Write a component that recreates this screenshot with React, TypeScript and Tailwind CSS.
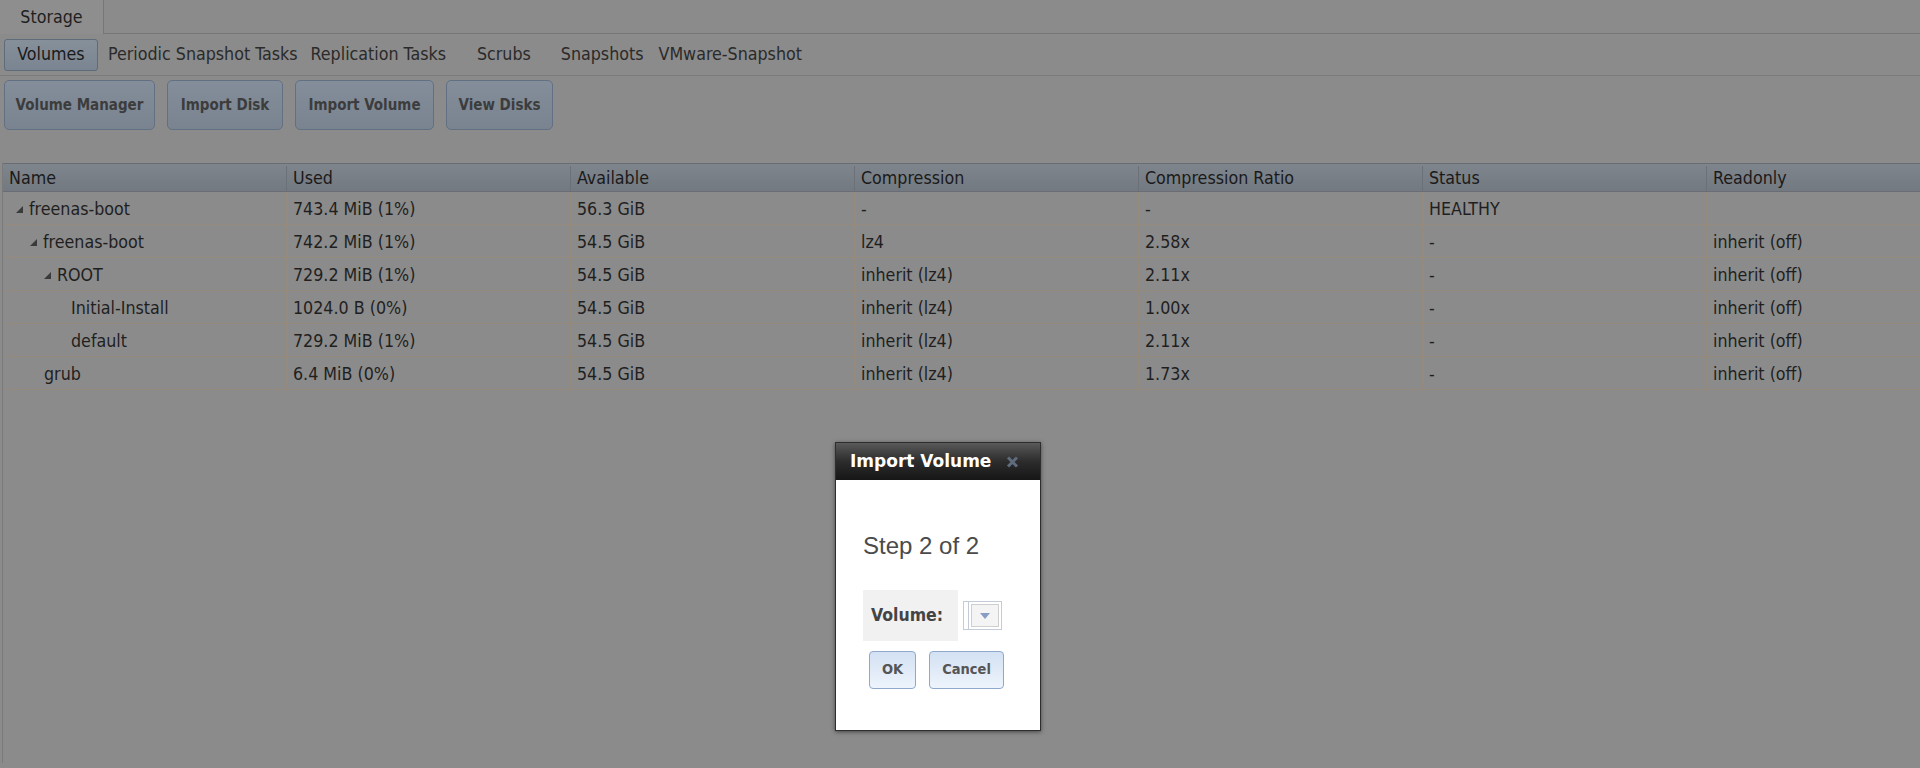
const font = "font-['DejaVu_Sans_Condensed','Liberation_Sans',sans-serif]";

const subnav = [
  { label: "Periodic Snapshot Tasks", ml: "ml-[10px]" },
  { label: "Replication Tasks", ml: "ml-[13px]" },
  { label: "Scrubs", ml: "ml-[31px]" },
  { label: "Snapshots", ml: "ml-[30px]" },
  { label: "VMware-Snapshot", ml: "ml-[15px]" },
];

const actions = [
  { label: "Volume Manager", w: "w-[151px]" },
  { label: "Import Disk", w: "w-[116px]" },
  { label: "Import Volume", w: "w-[139px]" },
  { label: "View Disks", w: "w-[107px]" },
];

const columns = [
  "Name",
  "Used",
  "Available",
  "Compression",
  "Compression Ratio",
  "Status",
  "Readonly",
];

type Row = {
  name: string;
  depth: number;
  open: boolean;
  cells: string[];
};

const rows: Row[] = [
  { name: "freenas-boot", depth: 0, open: true, cells: ["743.4 MiB (1%)", "56.3 GiB", "-", "-", "HEALTHY", ""] },
  { name: "freenas-boot", depth: 1, open: true, cells: ["742.2 MiB (1%)", "54.5 GiB", "lz4", "2.58x", "-", "inherit (off)"] },
  { name: "ROOT", depth: 2, open: true, cells: ["729.2 MiB (1%)", "54.5 GiB", "inherit (lz4)", "2.11x", "-", "inherit (off)"] },
  { name: "Initial-Install", depth: 3, open: false, cells: ["1024.0 B (0%)", "54.5 GiB", "inherit (lz4)", "1.00x", "-", "inherit (off)"] },
  { name: "default", depth: 3, open: false, cells: ["729.2 MiB (1%)", "54.5 GiB", "inherit (lz4)", "2.11x", "-", "inherit (off)"] },
  { name: "grub", depth: 2, open: false, cells: ["6.4 MiB (0%)", "54.5 GiB", "inherit (lz4)", "1.73x", "-", "inherit (off)"] },
];

const indent = ["pl-[13px]", "pl-[27px]", "pl-[41px]", "pl-[68px]"];

function Expander() {
  return (
    <svg width="7" height="7" viewBox="0 0 7 7" className="mr-[6px] shrink-0" aria-hidden="true">
      <path d="M7 0 L7 7 L0 7 Z" fill="#3a3a3a" />
    </svg>
  );
}

export default function App() {
  return (
    <div className={`relative h-[768px] w-[1920px] overflow-hidden bg-[#8b8b8b] text-[#1f1f1f] ${font}`}>
      {/* tab strip */}
      <div className="flex h-[34px] border-b border-[#777777]">
        <div className="-mb-px flex w-[104px] items-center justify-center border-r border-[#777777] bg-[#8e8e8e] text-[17.7px]">
          Storage
        </div>
      </div>

      {/* sub navigation */}
      <div className="flex h-[42px] items-center border-b border-[#7a7a7a] pl-[4px] text-[17.7px]">
        <div className="flex h-[32px] w-[94px] items-center justify-center rounded-[3px] border border-[#5e6b7b] bg-gradient-to-b from-[#86909b] to-[#7b8591] text-[#1a1a1a]">
          Volumes
        </div>
        {subnav.map((item) => (
          <span key={item.label} className={`${item.ml} text-[#2a2a2a]`}>
            {item.label}
          </span>
        ))}
      </div>

      {/* action buttons */}
      <div className="flex gap-[12px] pl-[4px] pt-[4px]">
        {actions.map((a) => (
          <div
            key={a.label}
            className={`${a.w} flex h-[50px] items-center justify-center rounded-[5px] border border-[#627083] bg-gradient-to-b from-[#848e9a] to-[#7a8490] text-[15px] font-bold text-[#3c3c3c]`}
          >
            {a.label}
          </div>
        ))}
      </div>

      {/* volumes grid */}
      <div className="ml-[2px] mt-[33px] h-[600px] border-l border-[#7a7a7a]">
        <div className="flex h-[29px] border-y border-[#6a6e74] bg-gradient-to-b from-[#7f858c] to-[#737980] pt-[2px] text-[17.7px] text-[#1a1a1a]">
          {columns.map((c, i) => (
            <div
              key={c}
              className={`flex w-[284px] shrink-0 items-center px-[6px] ${i < columns.length - 1 ? "border-r border-[#6c7178]" : ""}`}
            >
              {c}
            </div>
          ))}
        </div>
        {rows.map((r, ri) => (
          <div key={ri} className="flex h-[33px] border-b border-[#958a7c] text-[17.7px]">
            <div className={`flex w-[284px] shrink-0 items-center border-r border-[#958a7c] pt-[2px] ${indent[r.depth]}`}>
              {r.open ? <Expander /> : null}
              <span>{r.name}</span>
            </div>
            {r.cells.map((cell, ci) => (
              <div
                key={ci}
                className={`flex w-[284px] shrink-0 items-center px-[6px] pt-[2px] ${ci < r.cells.length - 1 ? "border-r border-[#958a7c]" : ""}`}
              >
                {cell}
              </div>
            ))}
          </div>
        ))}
      </div>

      {/* modal dialog */}
      <div className="absolute left-[835px] top-[442px] flex h-[289px] w-[206px] flex-col border border-[#2e2e2e] bg-white shadow-[0_1px_4px_rgba(0,0,0,0.5)]">
        <div className="flex h-[37px] items-center justify-between bg-gradient-to-b from-[#5a5a5a] via-[#2c2c2c] to-[#161616] pl-[14px] pr-[21px]">
          <span className="font-['DejaVu_Sans','Liberation_Sans',sans-serif] text-[17px] font-bold text-white">
            Import Volume
          </span>
          <svg width="13" height="12" viewBox="0 0 13 12" aria-hidden="true">
            <path d="M2 1.5 L11 10.5 M11 1.5 L2 10.5" stroke="#5f6c7d" strokeWidth="3" strokeLinecap="butt" />
          </svg>
        </div>
        <div className="flex flex-col pl-[27px] pt-[52px]">
          <div className="font-['Liberation_Sans',sans-serif] text-[24px] leading-[28px] text-[#4a4a4a]">
            Step 2 of 2
          </div>
          <div className="mt-[30px] flex items-center">
            <div className="flex h-[51px] w-[95px] items-center bg-[#f1f1f1] pl-[8px] text-[17.5px] font-bold text-[#444444]">
              Volume:
            </div>
            <div className="ml-[5px] flex h-[29px] w-[39px] items-stretch border border-[#c3cad8] bg-white">
              <div className="w-[5px] border-r border-[#c3cad8]" />
              <div className="m-[2px] flex flex-1 items-center justify-center border border-[#cfcfcf] bg-[#f4f4f4]">
                <svg width="10" height="6" viewBox="0 0 10 6" aria-hidden="true">
                  <path d="M0 0 L10 0 L5 6 Z" fill="#8a9cc4" />
                </svg>
              </div>
            </div>
          </div>
          <div className="ml-[6px] mt-[10px] flex gap-[13px] text-[14.5px] font-bold text-[#555555]">
            <div className="flex h-[38px] w-[47px] items-center justify-center rounded-[4px] border border-[#8ea9cc] bg-gradient-to-b from-[#d3e1f3] to-[#eef4fc]">
              OK
            </div>
            <div className="flex h-[38px] w-[75px] items-center justify-center rounded-[4px] border border-[#8ea9cc] bg-gradient-to-b from-[#d3e1f3] to-[#eef4fc]">
              Cancel
            </div>
          </div>
        </div>
      </div>
    </div>
  );
}
